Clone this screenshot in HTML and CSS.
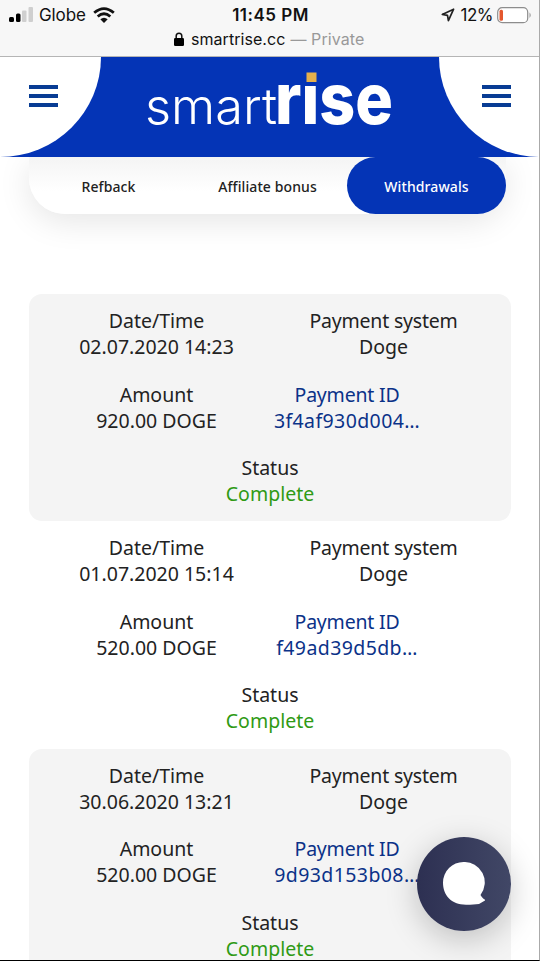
FILE: index.html
```html
<!DOCTYPE html>
<html lang="en">
<head>
<meta charset="utf-8">
<meta name="viewport" content="width=device-width, initial-scale=1">
<title>smartrise.cc</title>
<link rel="stylesheet" href="styles.css">
</head>
<body>
<div class="screen">
  <div class="browser">
    <div class="status">
      <div class="status-left">
        <svg class="signal" width="25" height="16" viewBox="0 0 25 16"><rect x="0" y="10" width="5" height="5" rx="1.5"/><rect x="7" y="6.500" width="4.500" height="8.500" rx="1.500"/><rect class="off" x="13" y="3.500" width="4.500" height="11.500" rx="1"/><rect class="off" x="19.500" y="0" width="4.500" height="15" rx="1"/></svg>
        <span class="carrier">Globe</span>
        <svg class="wifi" width="22" height="17" viewBox="0 0 22 17"><path d="M1.200 5.800Q11-2.600 20.800 5.800M4.700 9.500Q11 3.900 17.300 9.500"/><path class="dot" d="M7.300 12.200Q11 9.200 14.700 12.200L11 16z"/></svg>
      </div>
      <span class="clock">11:45 PM</span>
      <div class="status-right">
        <svg class="location" width="14" height="14" viewBox="0 0 14 14"><path d="M12.600 1.200 1.300 6.400l5.200 1 .9 5.300z"/></svg>
        <span class="percent">12%</span>
        <svg class="battery" width="35" height="17" viewBox="0 0 35 17"><rect class="case" x=".7" y=".7" width="30" height="15" rx="4.500"/><rect class="charge" x="2.500" y="2.700" width="3.500" height="11" rx="1.500"/><path class="cap" d="M32.500 5.500q2.500 2.700 0 5.400z"/></svg>
      </div>
    </div>
    <div class="address">
      <svg class="lock" width="10" height="14" viewBox="0 0 10 14"><path class="shackle" d="M2.200 7V4a2.800 2.800 0 0 1 5.600 0v3"/><rect x="0" y="6" width="10" height="8" rx="1.200"/></svg>
      <span class="host">smartrise.cc</span>
      <span class="private">— Private</span>
    </div>
  </div>

  <header class="header">
    <div class="corner corner-left"><span class="menu"><i></i><i></i><i></i></span></div>
    <svg class="logo" width="250" height="100" viewBox="145 57 250 100">
      <text class="smart" x="145" y="124" textLength="132" lengthAdjust="spacingAndGlyphs">smart</text>
      <text class="rise" x="275" y="124" textLength="118" lengthAdjust="spacingAndGlyphs">rise</text>
      <rect class="gap" x="303" y="68" width="17" height="18"/>
      <rect class="square" x="306.500" y="72.500" width="10" height="9.500"/>
    </svg>
    <div class="corner corner-right"><span class="menu"><i></i><i></i><i></i></span></div>
  </header>

  <nav class="tabs">
    <span class="tab refback">Refback</span>
    <span class="tab affiliate">Affiliate bonus</span>
    <span class="tab active">Withdrawals</span>
  </nav>

  <main class="list">
    <section class="card shaded">
      <div class="cell"><span class="date-label">Date/Time</span><span class="date">02.07.2020 14:23</span></div>
      <div class="cell"><span class="system-label">Payment system</span><span class="system">Doge</span></div>
      <div class="cell"><span class="amount-label">Amount</span><span class="amount">920.00 DOGE</span></div>
      <div class="cell payment"><span class="id-label">Payment ID</span><span class="hash">3f4af930d004…</span></div>
      <div class="cell wide"><span class="status-label">Status</span><span class="complete">Complete</span></div>
    </section>
    <section class="card">
      <div class="cell"><span class="date-label">Date/Time</span><span class="date">01.07.2020 15:14</span></div>
      <div class="cell"><span class="system-label">Payment system</span><span class="system">Doge</span></div>
      <div class="cell"><span class="amount-label">Amount</span><span class="amount">520.00 DOGE</span></div>
      <div class="cell payment"><span class="id-label">Payment ID</span><span class="hash">f49ad39d5db…</span></div>
      <div class="cell wide"><span class="status-label">Status</span><span class="complete">Complete</span></div>
    </section>
    <section class="card shaded">
      <div class="cell"><span class="date-label">Date/Time</span><span class="date">30.06.2020 13:21</span></div>
      <div class="cell"><span class="system-label">Payment system</span><span class="system">Doge</span></div>
      <div class="cell"><span class="amount-label">Amount</span><span class="amount">520.00 DOGE</span></div>
      <div class="cell payment"><span class="id-label">Payment ID</span><span class="hash">9d93d153b08…</span></div>
      <div class="cell wide"><span class="status-label">Status</span><span class="complete">Complete</span></div>
    </section>
  </main>

  <div class="chat">
    <svg width="42" height="44" viewBox="0 0 42 44"><path d="M20.500 0a20.500 20.500 0 0 1 17 33c1 2 2.500 3.500 5 5.200l-6.500 3.800c-4 .6-7 .7-13 .7C8 42.700 0 33 0 20.500A20.500 20.500 0 0 1 20.500 0z"/></svg>
  </div>
</div>
</body>
</html>
```
FILE: styles.css
```css
* { box-sizing: border-box; }
body { margin: 0; background: #fff; }
.screen {
  position: relative;
  width: 540px;
  height: 961px;
  overflow: hidden;
  border-right: 1px solid #aaa;
  border-bottom: 1px solid #000;
  background: #fff;
  font-family: "Noto Sans", sans-serif;
  color: #222;
}
.browser {
  position: relative;
  z-index: 3;
  height: 57px;
  width: 539px;
  background: #f7f7f7;
  border-bottom: 1px solid #b5b5b5;
  font-family: Inter, sans-serif;
  color: #111;
}
.status {
  display: grid;
  grid-template-columns: 1fr auto 1fr;
  align-items: center;
  height: 30px;
  padding: 0 7px 0 9px;
}
.status-left, .status-right { display: flex; align-items: center; }
.status-right { justify-content: flex-end; }
.carrier { margin: 0 7px 0 5px; font-size: 17px; letter-spacing: -.1px; }
.signal .off { fill: #cfcfcf; }
.wifi path { fill: none; stroke: #111; stroke-width: 2.800; }
.wifi .dot { fill: #111; stroke: none; }
.clock { font-size: 17px; font-weight: 600; letter-spacing: .5px; }
.location path { fill: none; stroke: #222; stroke-width: 1.700; stroke-linejoin: round; }
.percent { margin: 0 4px 0 6px; font-size: 17px; letter-spacing: -.5px; }
.battery .case { fill: #fff; stroke: #8d8d8d; stroke-width: 1.200; }
.battery .charge { fill: #e4572e; }
.battery .cap { fill: #999; }
.address {
  display: flex;
  align-items: center;
  height: 18px;
  padding-left: 174px;
  font-size: 16px;
}
.lock .shackle { fill: none; stroke: #111; stroke-width: 1.500; }
.host { margin: 0 5px 0 7px; letter-spacing: .05px; }
.private { color: #999; letter-spacing: .1px; }
.header {
  position: relative;
  z-index: 2;
  display: flex;
  justify-content: space-between;
  width: 540px;
  height: 100px;
  background: #0434b6;
}
.corner { width: 101px; height: 100px; background: #fff; }
.corner-left { border-radius: 0 0 100% 0; padding: 28px 0 0 29px; }
.corner-right { border-radius: 0 0 0 100%; padding: 28px 0 0 43px; }
.menu { display: flex; flex-direction: column; gap: 4.500px; width: 29px; }
.menu i { height: 4.300px; background: #083c94; }
.logo { overflow: visible; }
.logo text { fill: #fff; font-family: Inter, sans-serif; }
.logo .smart { font-size: 50px; font-weight: 300; }
.logo .rise { font-size: 71px; font-weight: 800; }
.logo .gap { fill: #0434b6; }
.logo .square { fill: #e5b04c; }
.tabs {
  position: relative;
  z-index: 1;
  display: grid;
  grid-template-columns: repeat(3, 159px);
  width: 477px;
  height: 57px;
  margin-left: 29px;
  border-radius: 0 0 36px 36px;
  background: linear-gradient(#f4f4f4, #fff 34px);
  box-shadow: 0 8px 32px rgba(0, 0, 0, .1);
}
.tab {
  display: flex;
  align-items: center;
  justify-content: center;
  padding-top: 1px;
  font-size: 14px;
  font-weight: 500;
  letter-spacing: .1px;
}
.active { border-radius: 29px; background: #0434b6; color: #fff; }
.list { width: 482px; margin: 80px 0 0 29px; }
.card {
  display: grid;
  grid-template-columns: 227px 227px;
  grid-template-rows: repeat(3, 52px);
  row-gap: 21.500px;
  height: 227.300px;
  padding: 14px;
  border-radius: 13px;
}
.shaded { background: #f4f4f4; }
.cell {
  display: flex;
  flex-direction: column;
  align-items: center;
  font-size: 19.500px;
  line-height: 26px;
  white-space: nowrap;
}
.system-label, .id-label { letter-spacing: -.2px; }
.hash { letter-spacing: .4px; }
.payment { width: 154px; color: #0b3288; }
.wide { grid-column: 1 / 3; }
.complete { color: #2f9a14; }
.chat {
  position: absolute;
  left: 417px;
  top: 837px;
  display: flex;
  align-items: center;
  justify-content: center;
  width: 94px;
  height: 94px;
  border-radius: 50%;
  background: linear-gradient(90deg, #2d3052, #414766);
  box-shadow: 0 8px 32px rgba(0, 0, 0, .22);
}
.chat path { fill: #fff; }
```
